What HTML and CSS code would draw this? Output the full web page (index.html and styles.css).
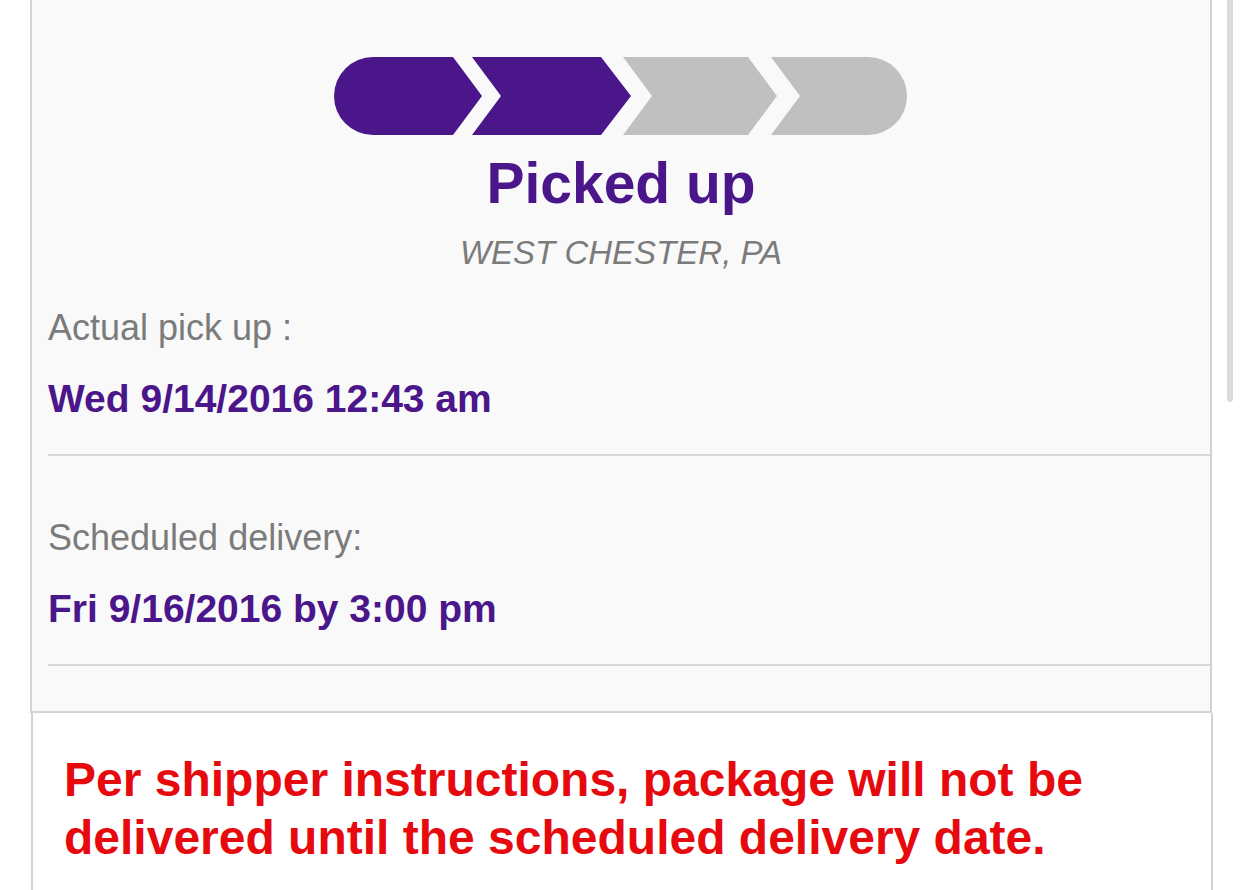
FILE: index.html
```html
<!DOCTYPE html>
<html lang="en">

<head>
    <meta charset="UTF-8">
    <meta name="viewport" content="width=device-width, initial-scale=1.0">
    <title>Tracking</title>
    <link rel="stylesheet" href="styles.css">
</head>

<body>

    <div class="panel">
        <!-- 进度条 -->
        <svg class="progress" width="575" height="78" viewBox="0 0 575 78">
            <path class="done" d="M39,0 H119 L148,39 L119,78 H39 A39,39 0 0 1 39,0 Z" />
            <path class="done" d="M138,0 H267 L297,39 L267,78 H138 L167,39 Z" />
            <path class="todo" d="M289,0 H414 L443,39 L414,78 H289 L318,39 Z" />
            <path class="todo" d="M437,0 H534 A39,39 0 0 1 534,78 H437 L466,39 Z" />
        </svg>
        <h1 class="status">Picked up</h1>
        <p class="place">WEST CHESTER, PA</p>

        <div class="rows">
            <div class="row">
                <p class="label">Actual pick up :</p>
                <p class="value">Wed 9/14/2016 12:43 am</p>
            </div>
            <div class="row">
                <p class="label">Scheduled delivery:</p>
                <p class="value">Fri 9/16/2016 by 3:00 pm</p>
            </div>
        </div>
    </div>

    <div class="note">
        <p>Per shipper instructions, package will not be delivered until the scheduled delivery date.</p>
    </div>

    <i class="scrollbar"></i>

</body>

</html>
```

FILE: styles.css
```css
* {
    padding: 0;
    margin: 0;
}

html {
    overflow: hidden;
}

body {
    background: #fff;
    font-family: "Liberation Sans", Arial, sans-serif;
}

.panel {
    width: 1178px;
    margin-left: 30px;
    padding-top: 57px;
    padding-bottom: 45px;
    background: #f9f9fa;
    border-left: 2px solid #d7d1d3;
    border-right: 2px solid #d7d1d3;
    border-bottom: 2px solid #d7d1d3;
}

.progress {
    display: block;
    margin: 0 auto;
}

.progress .done {
    fill: #4a168a;
}

.progress .todo {
    fill: #c0c0c0;
}

.status {
    margin-top: 16px;
    text-align: center;
    color: #4a168a;
    font-size: 57px;
    line-height: 64px;
    font-weight: bold;
}

.place {
    margin-top: 18px;
    text-align: center;
    color: #7b7b7b;
    font-size: 33px;
    line-height: 40px;
    font-style: italic;
}

.rows {
    padding-left: 16px;
}

.row {
    margin-top: 61px;
    padding-bottom: 33px;
    border-bottom: 2px solid #d9d9d9;
}

.row:first-child {
    margin-top: 34px;
}

.row .label {
    color: #7b7b7b;
    font-size: 36px;
    line-height: 42px;
}

.row .value {
    margin-top: 28px;
    color: #4a168a;
    font-size: 39px;
    line-height: 44px;
    font-weight: bold;
}

.note {
    width: 1147px;
    margin-left: 31px;
    padding: 38px 0 40px 31px;
    background: #fff;
    border-left: 2px solid #d7d1d3;
    border-right: 2px solid #d7d1d3;
}

.note p {
    color: #e60a0e;
    font-size: 48px;
    line-height: 58px;
    font-weight: bold;
}

/* 右侧滚动条 */
.scrollbar {
    position: fixed;
    top: -4px;
    left: 1227px;
    width: 6px;
    height: 406px;
    border-radius: 3px;
    background: #dcdcdc;
}
```
